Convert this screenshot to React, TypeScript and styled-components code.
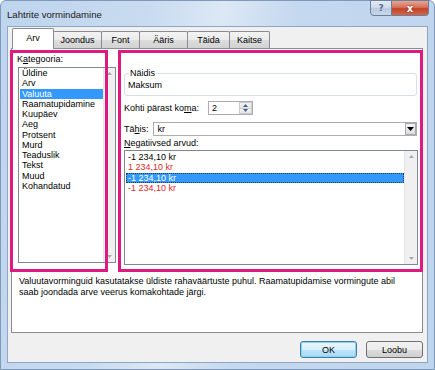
import React from 'react';
import styled, { createGlobalStyle, css } from 'styled-components';

const GlobalStyle = createGlobalStyle`
  html, body {
    margin: 0;
    padding: 0;
    background: #ffffff;
  }
  body {
    font-family: 'Liberation Sans', Arial, sans-serif;
    font-size: 9px;
    color: #000;
  }
  * {
    box-sizing: border-box;
  }
`;

const PINK = '#dc1a7f';

const Window = styled.div`
  width: 435px;
  height: 370px;
  display: flex;
  flex-direction: column;
  padding: 0 6px 6px 6px;
  border: 1px solid #7f99ba;
  border-radius: 6px 6px 0 0;
  background: linear-gradient(
    100deg,
    #bed5ee 0%,
    #c8dbf0 30%,
    #dce8f5 45%,
    #c4d8ef 60%,
    #bfd5ed 100%
  );
`;

const TitleBar = styled.div`
  height: 25px;
  display: flex;
  align-items: center;
`;

const Title = styled.div`
  flex: 1;
  font-size: 9.6px;
  color: #1a1a1a;
  padding-top: 1px;
`;

const CaptionButtons = styled.div`
  align-self: flex-start;
  display: flex;
  margin-top: -1px;
  margin-right: -1px;
`;

const CaptionButton = styled.div<{ close?: boolean }>`
  height: 16px;
  display: flex;
  align-items: center;
  justify-content: center;
  border: 1px solid #6d7f98;
  font-family: 'DejaVu Sans', sans-serif;
  font-weight: bold;
  ${(p) =>
    p.close
      ? css`
          width: 37px;
          border-left: none;
          border-radius: 0 0 4px 0;
          color: #ffffff;
          font-size: 10px;
          background: linear-gradient(180deg, #e7a695 0%, #d4725c 45%, #c44327 55%, #d0674c 100%);
          text-shadow: 0 0 2px #7a1a08;
        `
      : css`
          width: 22px;
          border-radius: 0 0 0 4px;
          color: #5a6f8c;
          font-size: 9px;
          background: linear-gradient(180deg, #e2ebf5 0%, #cfdceb 45%, #b9cbe0 55%, #c8d8ea 100%);
        `}
`;

const Client = styled.div`
  flex: 1;
  display: flex;
  flex-direction: column;
  background: #f0f0f0;
  border: 1px solid #8fa6c3;
`;

const TabRow = styled.div`
  display: flex;
  align-items: flex-end;
  height: 20px;
  margin: 1px 0 0 4px;
  position: relative;
  z-index: 1;
`;

const Tab = styled.div<{ active?: boolean; w: number }>`
  width: ${(p) => p.w}px;
  display: flex;
  align-items: center;
  justify-content: center;
  border: 1px solid #898c95;
  border-bottom: none;
  margin-left: -1px;
  border-radius: 2px 2px 0 0;
  &:first-child {
    margin-left: 0;
  }
  ${(p) =>
    p.active
      ? css`
          height: 21px;
          margin-bottom: -1px;
          background: #ffffff;
          padding-bottom: 2px;
          position: relative;
          z-index: 2;
        `
      : css`
          height: 17px;
          background: linear-gradient(180deg, #f3f3f3 0%, #ebebeb 50%, #dddddd 51%, #d2d2d2 100%);
        `}
`;

const Panel = styled.div`
  height: 285px;
  margin: 0 4px 0 3px;
  background: #ffffff;
  border: 1px solid #898c95;
  padding-top: 1px;
`;

const Columns = styled.div`
  display: flex;
  gap: 10px;
  margin: 0 -1px 0 -2px;
  height: 222px;
`;

const Annotated = styled.div<{ w: number }>`
  position: relative;
  width: ${(p) => p.w}px;
  display: flex;
  flex-direction: column;
  &::after {
    content: '';
    position: absolute;
    inset: 0;
    border: 3px solid ${PINK};
    pointer-events: none;
    z-index: 3;
  }
`;

const LeftCol = styled(Annotated)`
  padding: 4px 0 0 7px;
`;

const RightCol = styled(Annotated)`
  padding: 18px 6px 0 6px;
`;

const Label = styled.div`
  line-height: 10px;
  white-space: nowrap;
`;

const ListBox = styled.div<{ w: number; h: number }>`
  width: ${(p) => p.w}px;
  height: ${(p) => p.h}px;
  border: 1px solid #828790;
  background: #ffffff;
  display: flex;
  flex-shrink: 0;
`;

const ListItems = styled.div`
  flex: 1;
  display: flex;
  flex-direction: column;
`;

const ListItem = styled.div<{ selected?: boolean; red?: boolean }>`
  line-height: 10.25px;
  height: 10.25px;
  margin-left: 1px;
  padding-left: 2px;
  white-space: nowrap;
  color: ${(p) => (p.red ? '#e02a2a' : '#000')};
  ${(p) =>
    p.selected &&
    css`
      background: #3399ff;
      color: #ffffff;
    `}
`;

const FocusItem = styled(ListItem)`
  outline: 1px dotted #1a3a66;
  outline-offset: -1px;
`;

const ScrollBar = styled.div<{ w: number }>`
  width: ${(p) => p.w}px;
  background: #f0f0f0;
  border-left: 1px solid #e6e6e6;
  display: flex;
  flex-direction: column;
  justify-content: space-between;
  align-items: center;
  padding: 4px 0;
`;

const Arrow = ({ down, color = '#a8a8a8' }: { down?: boolean; color?: string }) => (
  <svg width="5" height="3" viewBox="0 0 5 3">
    <path d={down ? 'M0 0 L5 0 L2.5 3 Z' : 'M0 3 L5 3 L2.5 0 Z'} fill={color} />
  </svg>
);

const GroupBox = styled.fieldset`
  margin: 0;
  padding: 2px 0 4px 3px;
  border: 1px solid #d5dfe5;
  border-radius: 3px;
  height: 28px;
  line-height: 10px;
`;

const Legend = styled.legend`
  padding: 0 1px;
  margin-left: 1px;
  line-height: 10px;
`;

const FieldRow = styled.div<{ mt: number }>`
  display: flex;
  align-items: center;
  margin-top: ${(p) => p.mt}px;
`;

const SpinBox = styled.div`
  margin-left: 9px;
  width: 45px;
  height: 14px;
  border: 1px solid #abadb3;
  display: flex;
  align-items: center;
  padding-left: 3px;
  background: #ffffff;
`;

const SpinValue = styled.div`
  flex: 1;
`;

const SpinButtons = styled.div`
  width: 13px;
  height: 12px;
  display: flex;
  flex-direction: column;
`;

const SpinButton = styled.div`
  flex: 1;
  display: flex;
  align-items: center;
  justify-content: center;
  border: 1px solid #c9ccd2;
  background: linear-gradient(180deg, #f6f6f6, #e4e4e4);
  & + & {
    border-top: none;
  }
`;

const Combo = styled.div`
  margin-left: 4px;
  flex: 1;
  height: 14px;
  border: 1px solid #abadb3;
  display: flex;
  align-items: center;
  padding-left: 4px;
  background: #ffffff;
`;

const ComboText = styled.div`
  flex: 1;
`;

const ComboButton = styled.div`
  width: 11px;
  height: 12px;
  border: 1px solid #a8a8a8;
  display: flex;
  align-items: center;
  justify-content: center;
  background: linear-gradient(180deg, #f4f4f4, #dcdcdc);
`;

const Description = styled.div`
  margin: 4px 0 0 7px;
  line-height: 11px;
  width: 382px;
`;

const ButtonBar = styled.div`
  display: flex;
  justify-content: flex-end;
  gap: 9px;
  padding: 8px 4px 0 0;
`;

const Button = styled.div<{ primary?: boolean }>`
  width: 57px;
  height: 17px;
  display: flex;
  align-items: center;
  justify-content: center;
  border-radius: 3px;
  border: 1px solid ${(p) => (p.primary ? '#3c7fb1' : '#707070')};
  background: linear-gradient(180deg, #f2f2f2 0%, #ebebeb 50%, #dddddd 51%, #cfcfcf 100%);
  ${(p) =>
    p.primary &&
    css`
      box-shadow: inset 0 0 0 1px #8fd0ef;
      background: linear-gradient(180deg, #eaf6fd 0%, #d9f0fc 50%, #bee6fd 51%, #a7d9f5 100%);
    `}
`;

const tabs = [
  { label: 'Arv', w: 42 },
  { label: 'Joondus', w: 49 },
  { label: 'Font', w: 39 },
  { label: 'Ääris', w: 49 },
  { label: 'Täida', w: 43 },
  { label: 'Kaitse', w: 41 },
];

const categories = [
  'Üldine',
  'Arv',
  'Valuuta',
  'Raamatupidamine',
  'Kuupäev',
  'Aeg',
  'Protsent',
  'Murd',
  'Teaduslik',
  'Tekst',
  'Muud',
  'Kohandatud',
];

const App: React.FC = () => {
  return (
    <>
      <GlobalStyle />
      <Window>
        <TitleBar>
          <Title>Lahtrite vormindamine</Title>
          <CaptionButtons>
            <CaptionButton>?</CaptionButton>
            <CaptionButton close>x</CaptionButton>
          </CaptionButtons>
        </TitleBar>
        <Client>
          <TabRow>
            {tabs.map((t, i) => (
              <Tab key={t.label} w={t.w} active={i === 0}>
                {t.label}
              </Tab>
            ))}
          </TabRow>
          <Panel>
            <Columns>
              <LeftCol w={98}>
                <Label>
                  K<u>a</u>tegooria:
                </Label>
                <ListBox w={98} h={196} style={{ marginTop: 3, marginLeft: 1 }}>
                  <ListItems>
                    {categories.map((c) => (
                      <ListItem key={c} selected={c === 'Valuuta'}>
                        {c}
                      </ListItem>
                    ))}
                  </ListItems>
                  <ScrollBar w={12}>
                    <Arrow />
                    <Arrow down />
                  </ScrollBar>
                </ListBox>
              </LeftCol>
              <RightCol w={305}>
                <GroupBox>
                  <Legend>Näidis</Legend>
                  Maksum
                </GroupBox>
                <FieldRow mt={5}>
                  <Label>
                    Kohti pärast ko<u>m</u>a:
                  </Label>
                  <SpinBox>
                    <SpinValue>2</SpinValue>
                    <SpinButtons>
                      <SpinButton>
                        <Arrow color="#4d6185" />
                      </SpinButton>
                      <SpinButton>
                        <Arrow down color="#4d6185" />
                      </SpinButton>
                    </SpinButtons>
                  </SpinBox>
                </FieldRow>
                <FieldRow mt={7}>
                  <Label>
                    Tä<u>h</u>is:
                  </Label>
                  <Combo>
                    <ComboText>kr</ComboText>
                    <ComboButton>
                      <svg width="7" height="4" viewBox="0 0 7 4">
                        <path d="M0 0 L7 0 L3.5 4 Z" fill="#000" />
                      </svg>
                    </ComboButton>
                  </Combo>
                </FieldRow>
                <Label style={{ marginTop: 2 }}>
                  <u>N</u>egatiivsed arvud:
                </Label>
                <ListBox w={294} h={115} style={{ marginTop: 2 }}>
                  <ListItems style={{ paddingTop: 1 }}>
                    <ListItem>-1 234,10 kr</ListItem>
                    <ListItem red>1 234,10 kr</ListItem>
                    <FocusItem selected>-1 234,10 kr</FocusItem>
                    <ListItem red>-1 234,10 kr</ListItem>
                  </ListItems>
                  <ScrollBar w={13}>
                    <Arrow />
                    <Arrow down />
                  </ScrollBar>
                </ListBox>
              </RightCol>
            </Columns>
            <Description>
              Valuutavorminguid kasutatakse üldiste rahaväärtuste puhul. Raamatupidamise vormingute abil
              saab joondada arve veerus komakohtade järgi.
            </Description>
          </Panel>
          <ButtonBar>
            <Button primary>OK</Button>
            <Button>Loobu</Button>
          </ButtonBar>
        </Client>
      </Window>
    </>
  );
};

export default App;
